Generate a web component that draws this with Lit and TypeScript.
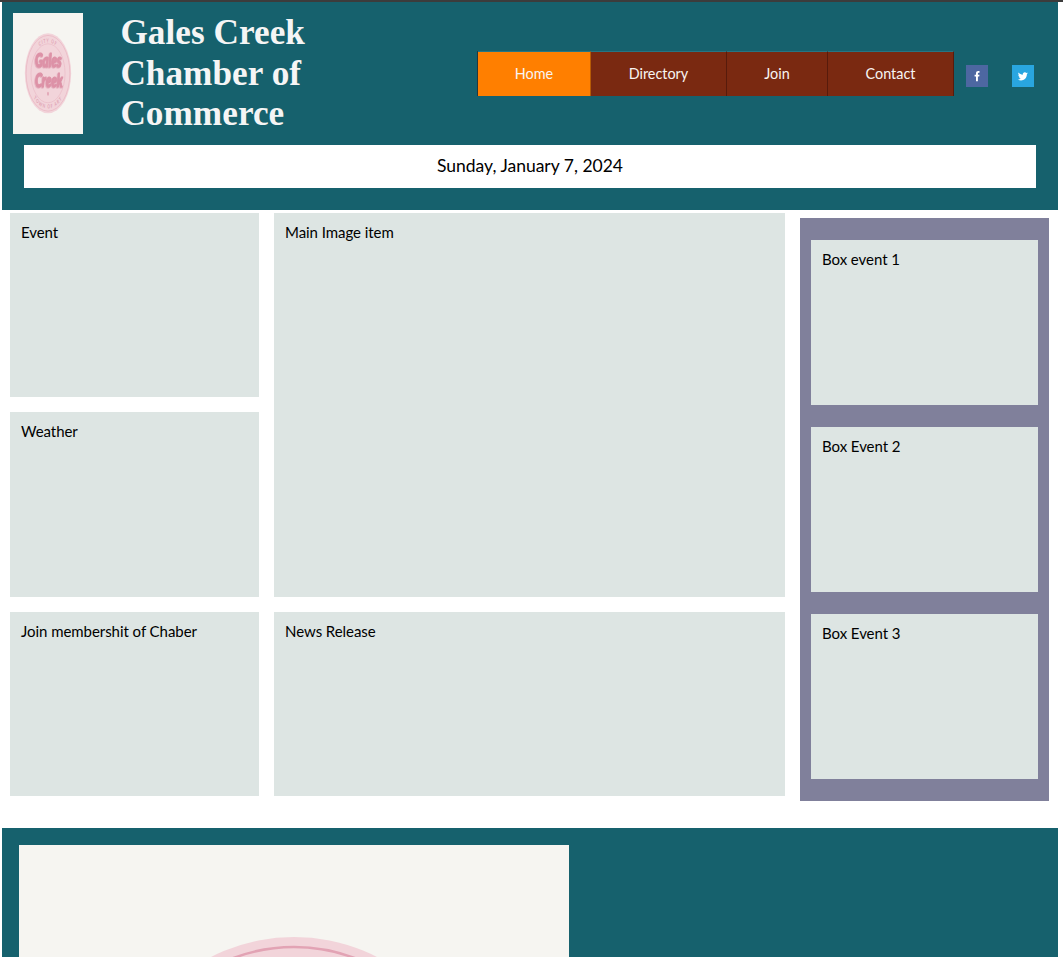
import { LitElement, html, css, svg, nothing } from "lit";
import { customElement, property } from "lit/decorators.js";

@customElement("town-logo")
class TownLogo extends LitElement {
  @property({ type: Boolean }) plain = false;
  static styles = css`
    :host { display: block; background: #f6f5f1; }
    svg { display: block; width: 100%; height: 100%; }
    .word { font: italic 900 84px/1 Lato, sans-serif; fill: #dd92a7; stroke: #dd92a7; stroke-width: 5; stroke-linejoin: round; filter: drop-shadow(-5px 4px 0 #dfa0b2); }
    .ring { font: 700 25px Lato, sans-serif; fill: #dfa3b4; letter-spacing: 7px; }
  `;
  render() {
    const lettering = svg`
      <text class="ring" text-anchor="middle"><textPath href="#top" startOffset="50%">CITY OF</textPath></text>
      <text class="ring" text-anchor="middle"><textPath href="#bottom" startOffset="50%">TOWN OF ART</textPath></text>
      <text class="word" x="174" y="246" textLength="208" lengthAdjust="spacingAndGlyphs">Gales</text>
      <text class="word" x="174" y="338" textLength="218" lengthAdjust="spacingAndGlyphs">Creek</text>`;
    return html`<svg viewBox="0 0 550 550" preserveAspectRatio="none">
      ${svg`
      <defs>
        <path id="top" d="M135 274 A140 140 0 0 1 415 274" />
        <path id="bottom" d="M115 274 A160 160 0 0 0 435 274" />
      </defs>
      <circle cx="275" cy="274" r="182" fill="#f2d4da" />
      <circle cx="275" cy="274" r="172" fill="none" stroke="#e2a3b4" stroke-width="2.6" />
      <circle cx="275" cy="274" r="134" fill="none" stroke="#e6b1bf" stroke-width="3" />
      <ellipse cx="275" cy="367" rx="7" ry="9" fill="#e2a3b4" />
      ${this.plain ? nothing : lettering}`}
    </svg>`;
  }
}

@customElement("content-box")
class ContentBox extends LitElement {
  @property() label = "";
  static styles = css`
    :host { display: block; box-sizing: border-box; background: #dde5e3; padding: 10px 11px; font: 15px/18px Lato, sans-serif; letter-spacing: -0.05px; color: #000; }
  `;
  render() {
    return html`${this.label}`;
  }
}

@customElement("app-root")
class AppRoot extends LitElement {
  static styles = css`
    :host { display: block; box-sizing: border-box; height: 957px; overflow: hidden; background: #fff; border-top: 2px solid #3c3c3c; padding: 0 5px 0 2px; font-family: Lato, sans-serif; }
    .header { height: 208px; background: #16616d; box-sizing: border-box; padding-top: 10px; }
    .top { display: flex; height: 133px; align-items: flex-start; }
    .small { width: 70px; height: 121px; margin: 1px 37.4px 0 11px; flex: none; }
    h1 { margin: 1px 0 0; width: 357.6px; height: 121px; flex: none; font: bold 35.2px/40.5px "Liberation Serif", serif; letter-spacing: 0.05px; color: #f5f5f5; }
    h1 span { display: block; }
    nav { display: flex; margin-top: 39px; margin-left: -1px; border-left: 1px solid #23383e; flex: none; }
    nav a { box-sizing: border-box; height: 45px; border-top: 1px solid #267583; border-right: 1px solid #571b0c; background: #7a2911; background-clip: padding-box; color: #f8f4f2; font-size: 14.4px; line-height: 43px; text-align: center; }
    nav a.active { background-color: #ff7f00; border-right-color: #b65b06; }
    .w0 { width: 113px; } .w1 { width: 136px; } .w2 { width: 101px; } .w3 { width: 126px; }
    .social { display: flex; gap: 24px; margin: 53px 0 0 12px; }
    .social svg { display: block; width: 22px; height: 22px; }
    .date { margin: 0 22px; height: 43px; background: #fff; text-align: center; font-size: 17.5px; line-height: 41px; }
    .main { display: grid; grid-template-columns: 249px 511px 249px; column-gap: 15px; padding: 3px 0 0 8px; height: 618px; box-sizing: border-box; align-items: start; }
    .left { display: grid; grid-template-rows: 184px 185px 184px; row-gap: 15px; }
    .mid { display: grid; grid-template-rows: 384px 184px; row-gap: 15px; }
    .side { display: grid; grid-template-rows: repeat(3, 165px); row-gap: 22px; margin-top: 5px; padding: 22px 11px; background: #80809b; }
    .footer { height: 584px; background: #16616d; padding: 17px; }
    .large { width: 550px; height: 550px; }
  `;
  render() {
    return html`
      <header class="header">
        <div class="top">
          <town-logo class="small"></town-logo>
          <h1><span>Gales Creek</span><span>Chamber of</span><span>Commerce</span></h1>
          <nav>
            ${["Home", "Directory", "Join", "Contact"].map((t, i) => html`<a class="w${i} ${i === 0 ? "active" : ""}">${t}</a>`)}
          </nav>
          <div class="social">
            <svg viewBox="0 0 22 22"><rect width="22" height="22" fill="#4d67a1" /><path fill="#fff" d="M10 16.2v-4.6H8.6V9.7H10V8.4c0-1.6.9-2.4 2.3-2.4h1.2v1.8h-.8c-.6 0-.8.3-.8.8v1.1h1.6l-.3 1.9h-1.3v4.6z" /></svg>
            <svg viewBox="0 0 22 22"><rect width="22" height="22" fill="#29a6e0" /><path fill="#fff" d="M16 8.1c-.4.2-.8.3-1.2.4.4-.3.7-.7.9-1.1-.4.2-.8.4-1.3.5a2.1 2.1 0 0 0-3.6 1.9c-1.7 0-3.2-.9-4.2-2.2-.6 1-.2 2.2.6 2.8-.3 0-.6-.1-.9-.3 0 1 .7 1.9 1.6 2.1-.3.1-.6.1-.9 0 .3.8 1 1.4 1.9 1.4-.9.7-2 1-3 .9 3.9 2.4 9-.2 9-5.3.4-.3.8-.7 1.1-1.1z" /></svg>
          </div>
        </div>
        <div class="date">Sunday, January 7, 2024</div>
      </header>
      <main class="main">
        <div class="left">
          <content-box label="Event"></content-box>
          <content-box label="Weather"></content-box>
          <content-box label="Join membershit of Chaber"></content-box>
        </div>
        <div class="mid">
          <content-box label="Main Image item"></content-box>
          <content-box label="News Release"></content-box>
        </div>
        <aside class="side">
          <content-box label="Box event 1"></content-box>
          <content-box label="Box Event 2"></content-box>
          <content-box label="Box Event 3"></content-box>
        </aside>
      </main>
      <footer class="footer"><town-logo class="large" plain></town-logo></footer>
    `;
  }
}
